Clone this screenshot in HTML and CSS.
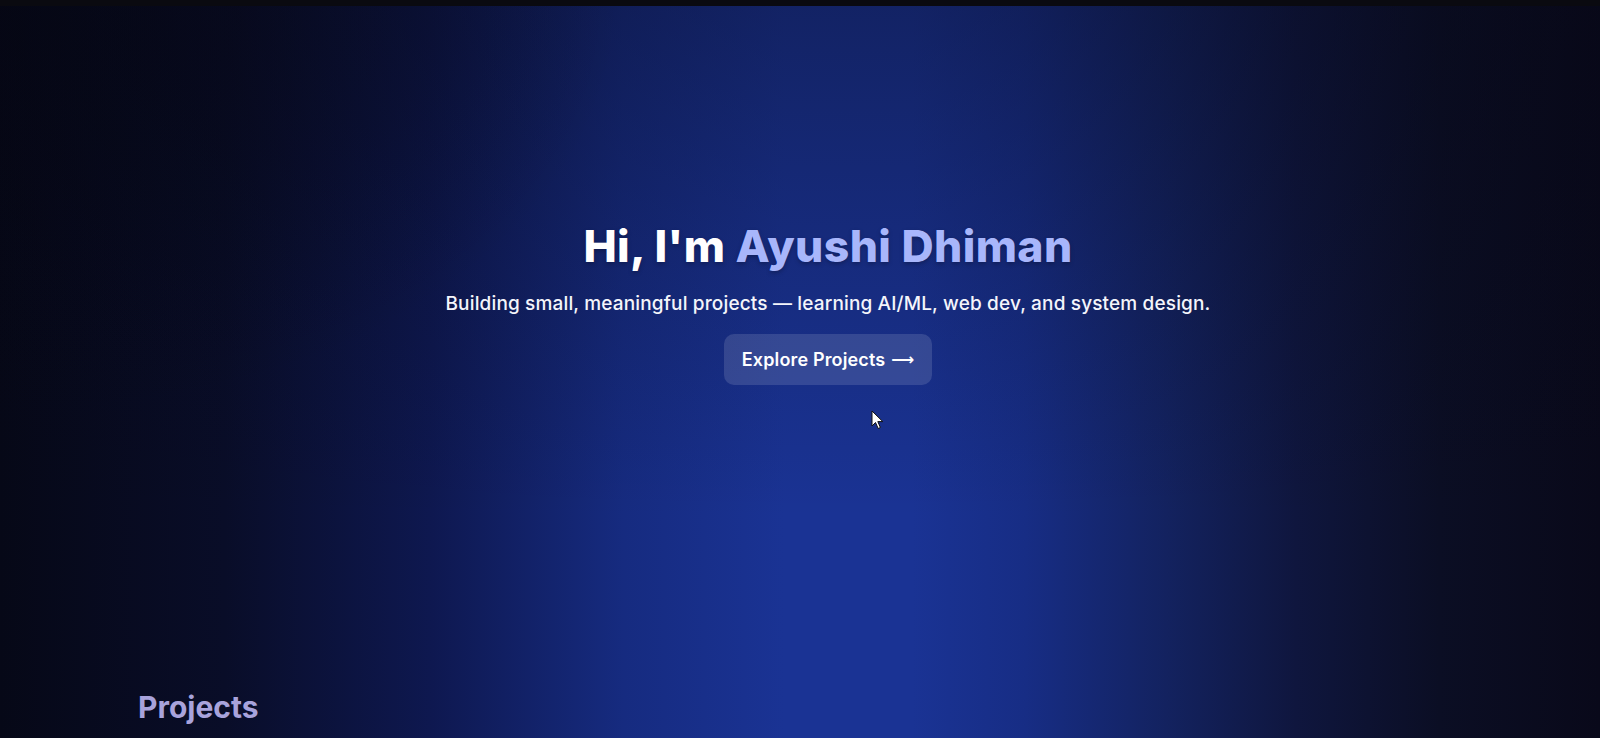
FILE: index.html
```html
<!DOCTYPE html>
<html lang="en">
<head>
<meta charset="utf-8">
<title>Ayushi Dhiman</title>
<link rel="stylesheet" href="styles.css">
</head>
<body>
<div class="bezel"></div>
<main class="page">
  <section class="hero">
    <h1 class="hero-title">Hi, I'm <span class="accent">Ayushi Dhiman</span></h1>
    <p class="hero-sub">Building small, meaningful projects — learning AI/ML, web dev, and system design.</p>
    <a class="btn" href="#projects">Explore Projects <span class="arrow">⟶</span></a>
  </section>
  <section class="projects" id="projects">
    <h2 class="section-title">Projects</h2>
  </section>
</main>
<svg class="cursor" width="14" height="20" viewBox="0 0 14 20" aria-hidden="true">
  <path d="M1 1 L1 16 L4.5 12.5 L7.2 18.5 L9.4 17.5 L6.8 11.6 L11.8 11.6 Z" fill="#fff" stroke="#111" stroke-width="1"/>
</svg>
</body>
</html>
```

FILE: styles.css
```css
* { box-sizing: border-box; }

html, body {
  margin: 0;
  padding: 0;
  height: 100%;
}

body {
  font-family: "Inter", "Open Sans", "Liberation Sans", sans-serif;
  color: #fff;
  overflow: hidden;
  background-color: #07091a;
  background-image:
    radial-gradient(ellipse 620px 420px at 0px 0px, rgba(5, 6, 18, 0.55) 0%, rgba(5, 6, 18, 0) 100%),
    linear-gradient(to bottom, rgba(6, 7, 22, 0.38) 0%, rgba(6, 7, 22, 0.18) 35%, rgba(6, 7, 22, 0) 70%),
    linear-gradient(to right, #060817 0%, #090d28 14%, #0e1850 27%, #162b80 39%, #1a3394 49%, #1a3394 57%, #172d85 64%, #13225f 73%, #0f163e 81%, #0b0e24 90%, #09091a 100%);
}

.bezel {
  height: 6px;
  background: #0a0a10;
}

.page {
  display: flex;
  flex-direction: column;
}

.hero {
  height: 666px;
  padding-top: 211px;
  padding-left: 56px;
  display: flex;
  flex-direction: column;
  align-items: center;
  text-align: center;
}

.hero-title {
  margin: 0;
  font-size: 44.5px;
  line-height: 58px;
  font-weight: 800;
  letter-spacing: 0.4px;
  text-shadow: 0 2px 4px rgba(0, 0, 0, 0.25);
}

.accent {
  color: #a8b6fb;
}

.hero-sub {
  margin: 15px 0 0;
  font-size: 19px;
  line-height: 27px;
  font-weight: 500;
  color: #f4f5fb;
  letter-spacing: 0.15px;
}

.btn {
  margin-top: 17px;
  width: 208px;
  height: 51px;
  display: flex;
  align-items: center;
  justify-content: center;
  gap: 6px;
  border-radius: 10px;
  background: rgba(255, 255, 255, 0.13);
  color: #fff;
  text-decoration: none;
  font-size: 18px;
  font-weight: 600;
  letter-spacing: 0.15px;
}

.arrow {
  font-family: "DejaVu Sans", sans-serif;
  font-size: 16px;
  font-weight: 700;
  letter-spacing: 0;
}

.projects {
  padding: 17px 138px 0;
}

.section-title {
  margin: 0;
  font-size: 30px;
  line-height: 36px;
  font-weight: 700;
  color: #a8a3dc;
}

.cursor {
  position: absolute;
  left: 871px;
  top: 410px;
}
```
